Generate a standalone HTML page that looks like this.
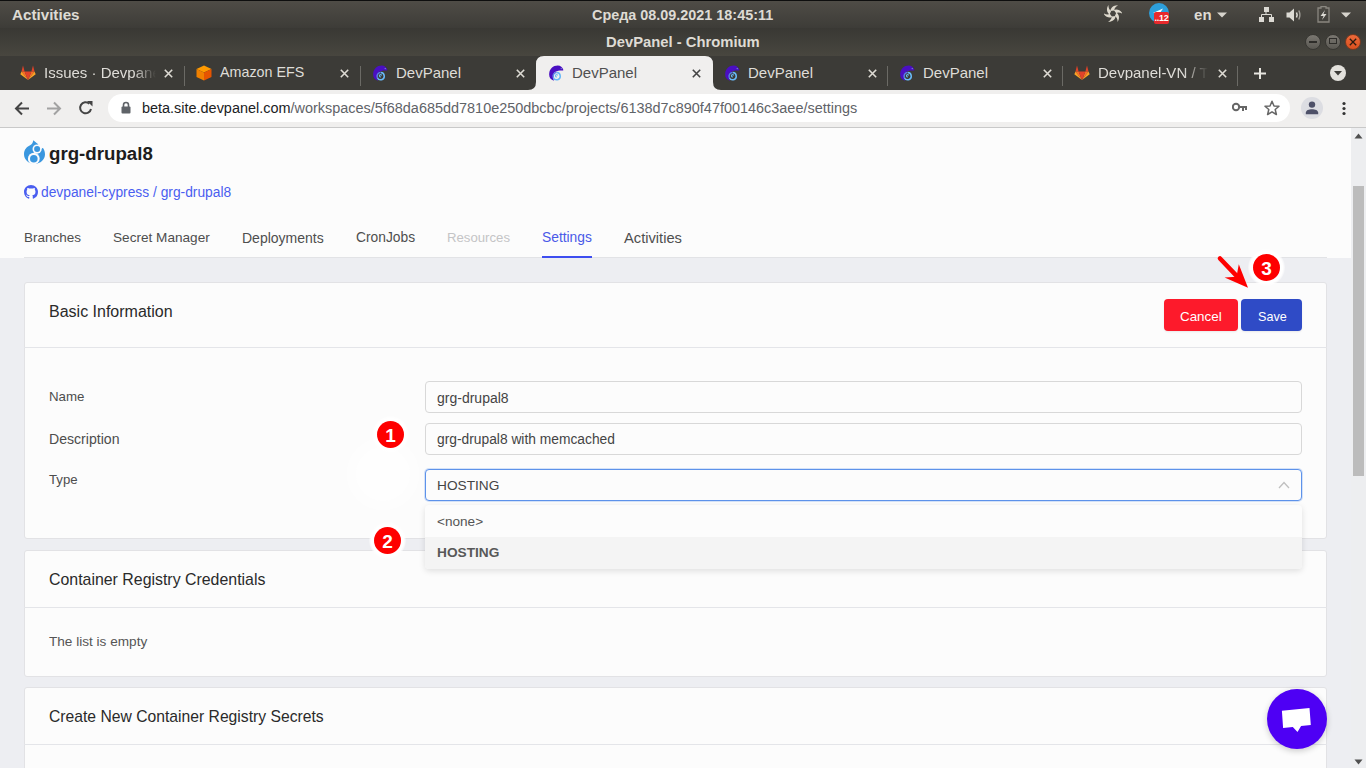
<!DOCTYPE html>
<html><head><meta charset="utf-8">
<style>
*{box-sizing:border-box;margin:0;padding:0}
html,body{width:1366px;height:768px;overflow:hidden;font-family:"Liberation Sans",sans-serif;background:#fbfbfc}
.a{position:absolute;white-space:nowrap;line-height:1}
#top{left:0;top:0;width:1366px;height:28px;background:linear-gradient(#4f4c46,#3d3c38);border-top:1px solid #0e0e0e}
#title{left:0;top:28px;width:1366px;height:28px;background:linear-gradient(#393834,#48463f)}
#tabs{left:0;top:56px;width:1366px;height:34px;background:#3c3b37}
#toolbar{left:0;top:90px;width:1366px;height:38px;background:#f0efee;border-bottom:1px solid #c9c9c9}
.wbtn{width:16px;height:16px;border-radius:50%;background:linear-gradient(#7a7771,#5a5852);border:1px solid #383733}
.wt{color:#dedbd4;font-weight:bold;font-size:14px}
.tabt{color:#dfddd8;font-size:15px;top:8.5px}
.x{top:13px;width:9px;height:9px}
.sep{top:10px;width:1px;height:20px;background:#6b6a65}
.ico{top:8px;width:17px;height:17px}
#page{left:0;top:128px;width:1366px;height:640px;background:#edeef2;overflow:hidden}
#hdr{left:0;top:0;width:1351px;height:130px;background:#fcfcfc}
.card{left:24px;width:1303px;background:#fcfcfc;border:1px solid #e2e2e5;border-radius:3px}
.lab{color:#4d4d4d;font-size:14px}
.inp{position:absolute;left:425px;width:877px;height:32px;border:1px solid #d8d8d8;border-radius:4px;background:#fcfcfc}
.it{color:#444;font-size:14px}
.ct{color:#2a2a2a;font-size:16px}
.tabn{font-size:14px;color:#4e4e4e;top:103px}
.mk{position:absolute;width:37px;height:37px;border-radius:50%;background:radial-gradient(circle,#fff 62%,rgba(255,255,255,0) 74%)}
.mk div{position:absolute;left:5px;top:5px;width:27px;height:27px;border-radius:50%;background:#fe0000;color:#fff;font-weight:bold;font-size:19px;text-align:center;line-height:29px}
</style></head><body>
<svg width="0" height="0" style="position:absolute">
<defs>
<symbol id="gl" viewBox="0 0 16 15">
 <polygon points="1.5,6.5 3,0.5 4.6,6.5" fill="#e24329"/>
 <polygon points="11.4,6.5 13,0.5 14.5,6.5" fill="#e24329"/>
 <polygon points="1.5,6.5 4.6,6.5 8,15" fill="#fc6d26"/>
 <polygon points="14.5,6.5 11.4,6.5 8,15" fill="#fc6d26"/>
 <polygon points="0.3,9.3 1.5,6.5 8,15" fill="#fca326"/>
 <polygon points="15.7,9.3 14.5,6.5 8,15" fill="#fca326"/>
 <polygon points="4.6,6.5 11.4,6.5 8,15" fill="#e24329"/>
</symbol>
<symbol id="dp" viewBox="0 0 15 16">
 <path d="M5,15.8 C1.5,14.8 -0.2,12 0.2,8.5 C0.6,4 4,0.6 8.8,0.6 C11.5,0.6 13.5,2.2 14.3,4.8 L14.2,5.6 C11.5,5.4 8.5,5.6 6.5,6.8 C4,8.3 3.2,11.5 5,15.8 Z" fill="#4a0fc2"/>
 <path d="M4.3,12.5 A3.6,3.6 0 1 0 7.8,7.6" fill="none" stroke="#68b9f7" stroke-width="1.5"/>
 <path d="M7.6,7.6 A3.6,3.6 0 0 0 4.3,12.5" fill="none" stroke="#5a7ee8" stroke-width="1.5"/>
 <path d="M7.8,11.8 A1.1,1.1 0 1 1 8.6,10.5" fill="none" stroke="#68b9f7" stroke-width="1.1"/>
 <circle cx="12.2" cy="3.6" r="0.6" fill="#8ad"/>
</symbol>
<symbol id="aw" viewBox="0 0 16 16">
 <polygon points="8,0.5 15.5,4 8,7.5 0.5,4" fill="#ff9a00"/>
 <polygon points="0.5,4 8,7.5 8,15.5 0.5,12" fill="#f08000"/>
 <polygon points="15.5,4 8,7.5 8,15.5 15.5,12" fill="#e65400"/>
</symbol>
<symbol id="cx" viewBox="0 0 9 9"><path d="M0.8,0.8 L8.2,8.2 M8.2,0.8 L0.8,8.2" stroke="#dedbd4" stroke-width="1.6"/></symbol>
<symbol id="cxd" viewBox="0 0 9 9"><path d="M0.8,0.8 L8.2,8.2 M8.2,0.8 L0.8,8.2" stroke="#444" stroke-width="1.6"/></symbol>
</defs>
</svg>

<!-- GNOME top bar -->
<div id="top" class="a">
  <div class="a wt" style="left:12px;top:6px;font-size:15.2px">Activities</div>
  <div class="a wt" style="left:592px;top:7px;font-size:14.4px">Среда 08.09.2021 18:45:11</div>

  <svg class="a" style="left:1104px;top:3px;width:18px;height:19px" viewBox="0 0 18 19">
    <g fill="#ddd8cc" transform="translate(9,9.5)">
      <path id="bl" d="M-2.6,-2.4 C-2.5,-5.5 0.5,-8.5 5,-8.2 C2.5,-6.8 1.2,-4.8 1.3,-2.9 Z"/>
      <use href="#bl" transform="rotate(60)"/><use href="#bl" transform="rotate(120)"/><use href="#bl" transform="rotate(180)"/><use href="#bl" transform="rotate(240)"/><use href="#bl" transform="rotate(300)"/>
    </g>
  </svg>
  <div class="a" style="left:1149px;top:2px;width:20px;height:20px;border-radius:50%;background:#2d9fdc"></div>
  <svg class="a" style="left:1152px;top:7px;width:12px;height:6px"><path d="M1,5 L11,0.5 L8,5 Z" fill="#fff"/></svg>
  <div class="a" style="left:1154px;top:11px;width:15px;height:12px;border-radius:2px;background:#e8292c;color:#fff;font-size:9px;font-weight:bold;line-height:12px;text-align:center;letter-spacing:-0.3px">..12</div>
  <div class="a wt" style="left:1194px;top:5.5px;font-size:15px;letter-spacing:0.2px">en</div>
  <svg class="a" style="left:1217px;top:11px;width:10px;height:6px"><path d="M0,0.5 H10 L5,5.5 Z" fill="#d6d3cc"/></svg>
  <svg class="a" style="left:1259px;top:5px;width:16px;height:16px"><g fill="#dcdad4"><rect x="5" y="1" width="5" height="5"/><rect x="0" y="11" width="5" height="5"/><rect x="10" y="11" width="5" height="5"/><path d="M7,6 V8.5 M2.5,11 V8.5 H12.5 V11" stroke="#dcdad4" stroke-width="1" fill="none"/></g></svg>
  <svg class="a" style="left:1286px;top:6.5px;width:17px;height:15px"><path d="M0.5,4.5 H3.5 L8,0.5 V13.5 L3.5,9.5 H0.5 Z" fill="#dcdad4"/><path d="M10.5,4.5 Q11.8,7 10.5,9.5" stroke="#dcdad4" stroke-width="1.6" fill="none"/><path d="M12.8,2.5 Q15,7 12.8,11.5" stroke="#a09d97" stroke-width="1.4" fill="none"/></svg>
  <svg class="a" style="left:1317px;top:5px;width:13px;height:17px"><path d="M4,0.5 H9 V2 H12 V16 H1 V2 H4 Z" fill="none" stroke="#8a8780" stroke-width="1.3"/><path d="M8,4 L3.5,10 H6.5 L5,14 L9.5,8 H6.5 Z" fill="#dcdad4"/></svg>
  <svg class="a" style="left:1341px;top:11px;width:10px;height:6px"><path d="M0,0.5 H10 L5,5.5 Z" fill="#d6d3cc"/></svg>
</div>
<div id="title" class="a">
  <div class="a wt" style="left:606px;top:7px;font-size:14.8px">DevPanel - Chromium</div>

  <div class="a wbtn" style="left:1305px;top:6px"></div><div class="a" style="left:1309px;top:13px;width:8px;height:1.6px;background:#2e2d2a"></div>
  <div class="a wbtn" style="left:1325px;top:6px"></div><div class="a" style="left:1329px;top:9.5px;width:8px;height:6px;border:1.4px solid #2e2d2a"></div>
  <div class="a wbtn" style="left:1345px;top:6px;background:linear-gradient(#ee6a3a,#d9501f);border-color:#7a3a20"></div>
  <svg class="a" style="left:1349px;top:10px;width:8px;height:8px"><path d="M0.8,0.8 L7.2,7.2 M7.2,0.8 L0.8,7.2" stroke="#2a1a10" stroke-width="1.3"/></svg>
</div>
<!-- tab strip -->
<div id="tabs" class="a">
  <svg class="a ico" style="left:20px;top:9px;width:16px;height:15px"><use href="#gl"/></svg>
  <div class="a tabt" style="left:44px;width:112px;overflow:hidden;-webkit-mask-image:linear-gradient(90deg,#000 80%,transparent)">Issues · Devpanel</div>
  <svg class="a x" style="left:164px"><use href="#cx"/></svg>
  <div class="a sep" style="left:184px"></div>
  <svg class="a ico" style="left:196px;width:16px;height:16px;top:9px"><use href="#aw"/></svg>
  <div class="a tabt" style="left:220px;font-size:14.3px">Amazon EFS</div>
  <svg class="a x" style="left:340px"><use href="#cx"/></svg>
  <div class="a sep" style="left:360px"></div>
  <svg class="a ico" style="left:373px;width:15px;height:16px;top:9px"><use href="#dp"/></svg>
  <div class="a tabt" style="left:396px">DevPanel</div>
  <svg class="a x" style="left:516px"><use href="#cx"/></svg>
  <!-- active tab -->
  <div class="a" style="left:528px;top:0px;width:193px;height:34px">
    <svg width="193" height="34" style="position:absolute;left:0;top:0"><path d="M0,34 Q8,34 8,26 L8,8 Q8,0 16,0 L177,0 Q185,0 185,8 L185,26 Q185,34 193,34 Z" fill="#f0efee"/></svg>
  </div>
  <svg class="a ico" style="left:549px;width:15px;height:16px;top:9px"><use href="#dp"/></svg>
  <div class="a tabt" style="left:572px;color:#505050">DevPanel</div>
  <svg class="a x" style="left:692px"><use href="#cxd"/></svg>
  <svg class="a ico" style="left:725px;width:15px;height:16px;top:9px"><use href="#dp"/></svg>
  <div class="a tabt" style="left:748px">DevPanel</div>
  <svg class="a x" style="left:868px"><use href="#cx"/></svg>
  <div class="a sep" style="left:887px"></div>
  <svg class="a ico" style="left:900px;width:15px;height:16px;top:9px"><use href="#dp"/></svg>
  <div class="a tabt" style="left:923px">DevPanel</div>
  <svg class="a x" style="left:1043px"><use href="#cx"/></svg>
  <div class="a sep" style="left:1062px"></div>
  <svg class="a ico" style="left:1074px;top:9px;width:16px;height:15px"><use href="#gl"/></svg>
  <div class="a tabt" style="left:1098px;width:110px;overflow:hidden;-webkit-mask-image:linear-gradient(90deg,#000 78%,transparent)">Devpanel-VN / Tasks</div>
  <svg class="a x" style="left:1218px"><use href="#cx"/></svg>
  <div class="a sep" style="left:1237px"></div>
  <svg class="a" style="left:1254px;top:12px;width:12px;height:11px"><path d="M6,0 V11 M0,5.5 H12" stroke="#e8e6e1" stroke-width="2"/></svg>
  <svg class="a" style="left:1329px;top:8px;width:18px;height:18px"><circle cx="9" cy="9" r="8" fill="#e3e1dc"/><path d="M5,7 L13,7 L9,11.5 Z" fill="#3c3b37"/></svg>
</div>

<!-- toolbar -->
<div id="toolbar" class="a">
  <svg class="a" style="left:14px;top:11px;width:16px;height:15px"><path d="M15,7.5 H2.5 M8,1.5 L2,7.5 L8,13.5" fill="none" stroke="#444" stroke-width="2"/></svg>
  <svg class="a" style="left:46px;top:11px;width:16px;height:15px"><path d="M1,7.5 H13.5 M8,1.5 L14,7.5 L8,13.5" fill="none" stroke="#a2a2a2" stroke-width="2"/></svg>
  <svg class="a" style="left:78px;top:10px;width:16px;height:16px"><path d="M13,9 A5.5,5.5 0 1 1 11.3,3.7" fill="none" stroke="#444" stroke-width="2"/><path d="M9,1 L14.5,1 L14.5,6.5 Z" fill="#444"/></svg>
  <div class="a" style="left:108px;top:4px;width:1182px;height:28px;border-radius:14px;background:#fff"></div>
  <svg class="a" style="left:121px;top:11px;width:10px;height:13px"><path d="M2.5,6 V4 A2.5,2.5 0 0 1 7.5,4 V6" fill="none" stroke="#5f6368" stroke-width="1.6"/><rect x="0.5" y="5.5" width="9" height="7" rx="1" fill="#5f6368"/></svg>
  <div class="a" style="left:142px;top:11px;font-size:14.45px;color:#202124">beta.site.devpanel.com<span style="color:#5f6368">/workspaces/5f68da685dd7810e250dbcbc/projects/6138d7c890f47f00146c3aee/settings</span></div>
  <svg class="a" style="left:1232px;top:12px;width:16px;height:10px"><circle cx="4" cy="5" r="3.2" fill="none" stroke="#666" stroke-width="2"/><path d="M7,5 H15 M11,5 V9 M14,5 V8" stroke="#666" stroke-width="2"/></svg>
  <svg class="a" style="left:1264px;top:10px;width:16px;height:16px"><path d="M8,1.2 L10,6 L15,6.3 L11.2,9.5 L12.4,14.5 L8,11.8 L3.6,14.5 L4.8,9.5 L1,6.3 L6,6 Z" fill="none" stroke="#666" stroke-width="1.5" stroke-linejoin="round"/></svg>
  <div class="a" style="left:1301px;top:7px;width:22px;height:22px;border-radius:50%;background:#dcdde2"></div>
  <svg class="a" style="left:1305px;top:10px;width:14px;height:15px"><circle cx="7" cy="4.6" r="3.2" fill="#4d5068"/><path d="M0.8,14.2 L0.8,12.8 C0.8,10.3 4,9.2 7,9.2 C10,9.2 13.2,10.3 13.2,12.8 L13.2,14.2 Z" fill="#4d5068"/></svg>
  <svg class="a" style="left:1341px;top:11px;width:6px;height:16px"><circle cx="3" cy="2.5" r="1.6" fill="#333"/><circle cx="3" cy="7.5" r="1.6" fill="#333"/><circle cx="3" cy="12.5" r="1.6" fill="#333"/></svg>
</div>

<!-- page -->
<div id="page" class="a">
  <div id="hdr" class="a"></div>
  <!-- header -->
  <svg class="a" style="left:24px;top:12px;width:22px;height:25px" viewBox="0 0 22 25">
    <path d="M9.3,0.2 L13.2,3.6 C18,5.5 21,9.5 21,14.2 C21,19.5 16.5,23.8 10.5,23.8 C4.5,23.8 0,19.5 0,14.2 C0,9.5 3,6.5 6.5,5 C8,4.2 9,2.5 9.3,0.2 Z" fill="#3a97df"/>
    <circle cx="13.1" cy="9.1" r="4.6" fill="#fbfbfc"/>
    <polygon points="13.6,3.4 22,0 22,7.2 18.6,7.9 16.5,9.5" fill="#fbfbfc"/>
    <circle cx="9.8" cy="18.7" r="5.9" fill="#fbfbfc"/>
    <circle cx="13.1" cy="9.1" r="3" fill="#3a97df"/>
    <circle cx="9.8" cy="18.7" r="3.8" fill="#3a97df"/>
  </svg>
  <div class="a" style="left:49px;top:17px;font-size:18.7px;font-weight:bold;color:#1d1d1d">grg-drupal8</div>
  <svg class="a" style="left:24px;top:57px;width:14px;height:14px" viewBox="0 0 16 16"><path fill="#4a5ef0" d="M8,0C3.58,0,0,3.58,0,8c0,3.54,2.29,6.53,5.47,7.59.4.07.55-.17.55-.38 0-.19-.01-.82-.01-1.49-2.01.37-2.53-.49-2.69-.94-.09-.23-.48-.94-.82-1.13-.28-.15-.68-.52-.01-.53.63-.01 1.08.58 1.23.82.72 1.21 1.87.87 2.33.66.07-.52.28-.87.51-1.07-1.78-.2-3.64-.89-3.640-3.950 0-.87.31-1.590.82-2.150-.08-.2-.36-1.02.08-2.12 0 0 .67-.21 2.200.82.64-.18 1.32-.27 2-.27.68 0 1.360.09 2 .27 1.53-1.040 2.200-.82 2.200-.82.44 1.100.16 1.920.08 2.120.51.56.82 1.270.82 2.150 0 3.070-1.870 3.750-3.650 3.950.29.25.54.73.54 1.480 0 1.070-.01 1.930-.01 2.200 0 .21.15.46.55.38A8.013,8.013,0,0,0,16,8C16,3.58,12.42,0,8,0Z"/></svg>
  <div class="a" style="left:41px;top:58px;font-size:13.8px;color:#4a5ef0">devpanel-cypress / grg-drupal8</div>
  <div class="a tabn" style="left:24px;font-size:13.5px">Branches</div>
  <div class="a tabn" style="left:113px;font-size:13.6px">Secret Manager</div>
  <div class="a tabn" style="left:242px;font-size:14px">Deployments</div>
  <div class="a tabn" style="left:356px;font-size:13.8px">CronJobs</div>
  <div class="a tabn" style="left:447px;font-size:13.2px;color:#c4c4c6">Resources</div>
  <div class="a tabn" style="left:542px;font-size:13.8px;color:#4a5ae8">Settings</div>
  <div class="a tabn" style="left:624px;font-size:14.7px">Activities</div>
  <div class="a" style="left:24px;top:129px;width:1303px;height:1px;background:#e2e3e6"></div>
  <div class="a" style="left:542px;top:128px;width:50px;height:2px;background:#3e4ef0"></div>

  <!-- card 1 -->
  <div class="a card" style="top:154px;height:257px"></div>
  <div class="a ct" style="left:49px;top:176px">Basic Information</div>
  <div class="a" style="left:24px;top:219px;width:1303px;height:1px;background:#e4e5e9"></div>
  <div class="a" style="left:1164px;top:171px;width:74px;height:32px;border-radius:4px;background:#fd1a2b;box-shadow:0 1px 2px rgba(0,0,0,.08)"></div>
  <div class="a" style="left:1180px;top:182px;font-size:13.4px;color:#fff">Cancel</div>
  <div class="a" style="left:1241px;top:171px;width:61px;height:32px;border-radius:4px;background:#2f4bc6;box-shadow:0 1px 2px rgba(0,0,0,.08)"></div>
  <div class="a" style="left:1258px;top:182.5px;font-size:12.6px;color:#fff">Save</div>

  <div class="a lab" style="left:49px;top:262px;font-size:13.3px">Name</div>
  <div class="a lab" style="left:49px;top:304px;font-size:14.1px">Description</div>
  <div class="a lab" style="left:49px;top:345px;font-size:13.2px">Type</div>

  <div class="inp" style="top:253px"></div>
  <div class="a it" style="left:437px;top:263px">grg-drupal8</div>
  <div class="inp" style="top:295px"></div>
  <div class="a it" style="left:437px;top:305px;font-size:13.8px">grg-drupal8 with memcached</div>
  <div class="inp" style="top:341px;border:1.5px solid #5d92ea;box-shadow:0 0 0 1px rgba(93,146,234,.25)"></div>
  <div class="a it" style="left:437px;top:351px;font-size:13.7px">HOSTING</div>
  <svg class="a" style="left:1278px;top:353px;width:12px;height:8px"><path d="M1,7 L6,1.5 L11,7" fill="none" stroke="#c0c0c0" stroke-width="1.3"/></svg>

  <!-- card 2 -->
  <div class="a card" style="top:422px;height:127px"></div>
  <div class="a ct" style="left:49px;top:444px;font-size:15.9px">Container Registry Credentials</div>
  <div class="a" style="left:24px;top:479px;width:1303px;height:1px;background:#e4e5e9"></div>
  <div class="a lab" style="left:49px;top:507px;font-size:13.6px;color:#555">The list is empty</div>

  <!-- card 3 -->
  <div class="a card" style="top:559px;height:200px"></div>
  <div class="a ct" style="left:49px;top:581px;font-size:15.7px">Create New Container Registry Secrets</div>
  <div class="a" style="left:24px;top:616px;width:1303px;height:1px;background:#e4e5e9"></div>

  <!-- dropdown -->
  <div class="a" style="left:425px;top:377px;width:877px;height:64px;border-radius:4px;background:#fcfcfc;box-shadow:0 2px 6px rgba(0,0,0,.12);overflow:hidden">
    <div class="a" style="left:0;top:32px;width:877px;height:32px;background:#f4f4f4"></div>
  </div>
  <div class="a it" style="left:437px;top:387px;font-size:13.6px;color:#555">&lt;none&gt;</div>
  <div class="a it" style="left:437px;top:418px;font-size:13.7px;font-weight:bold;color:#585858">HOSTING</div>

  <!-- click ring -->
  <div class="a" style="left:347px;top:310px;width:72px;height:72px;border-radius:50%;background:#fefefe;box-shadow:inset 0 0 0 9px #fdfdfd"></div>
  <!-- markers -->
  <div class="mk" style="left:372px;top:288px"><div>1</div></div>
  <div class="mk" style="left:369px;top:394px"><div>2</div></div>
  <div class="mk" style="left:1248px;top:121px"><div>3</div></div>
  <!-- red arrow -->
  <svg class="a" style="left:1210px;top:123px;width:45px;height:42px"><path d="M10,7.5 L29,27.3" stroke="#fe0000" stroke-width="4.6" stroke-linecap="round"/><path d="M38,36.7 L14.6,26.5 L26.5,25.8 L28.8,13.3 Z" fill="#fe0000"/></svg>

  <!-- chat -->
  <div class="a" style="left:1267px;top:561px;width:60px;height:60px;border-radius:50%;background:#4e00f4;box-shadow:0 2px 6px rgba(0,0,0,.2)"></div>
  <svg class="a" style="left:1281px;top:578px;width:31px;height:27px"><path d="M0.9,4.7 L28.5,1.9 L29.8,19 L20.1,20 L16.5,25.9 L11.8,21 L2.1,21.9 Z" fill="#fff"/></svg>

  <!-- scrollbar -->
  <div class="a" style="left:1351px;top:0;width:15px;height:640px;background:#edeef0"></div>
  <div class="a" style="left:1353px;top:58px;width:11px;height:290px;background:#bcbcbc"></div>
  <svg class="a" style="left:1354px;top:5px;width:9px;height:6px"><path d="M0.5,5.5 L4.5,0.5 L8.5,5.5 Z" fill="#505050"/></svg>
  <svg class="a" style="left:1354px;top:630.5px;width:9px;height:6px"><path d="M0.5,0.5 L4.5,5.5 L8.5,0.5 Z" fill="#505050"/></svg>
</div>
</body></html>
